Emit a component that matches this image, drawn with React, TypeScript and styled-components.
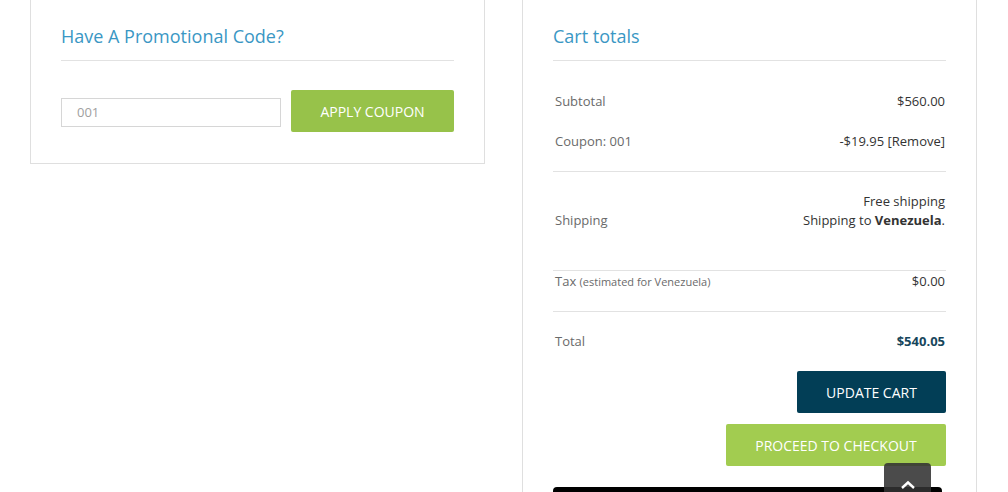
import React from "react";
import styled, { createGlobalStyle } from "styled-components";

const GlobalStyle = createGlobalStyle`
  html, body {
    margin: 0;
    padding: 0;
    background: #fff;
    overflow: hidden;
  }
  body {
    font-family: "Open Sans", "Liberation Sans", sans-serif;
    color: #333;
  }
`;

const Page = styled.div`
  display: flex;
  align-items: flex-start;
  gap: 37px;
  padding-left: 30px;
  margin-top: -1px;
`;

const Card = styled.div`
  width: 455px;
  box-sizing: border-box;
  border: 1px solid #dfdfdf;
  padding: 0 30px;
`;

const PromoCard = styled(Card)`
  padding-bottom: 31px;
`;

const TotalsCard = styled(Card)`
  min-height: 520px;
`;

const CardTitle = styled.h2`
  margin: 0;
  padding: 23px 0 11px;
  font-size: 18px;
  line-height: 26px;
  font-weight: 400;
  color: #3a97c4;
  border-bottom: 1px solid #e2e2e2;
`;

const CouponForm = styled.div`
  display: flex;
  align-items: center;
  gap: 10px;
  margin-top: 29px;
`;

const CouponInput = styled.input`
  width: 220px;
  height: 29px;
  margin-top: 2px;
  box-sizing: border-box;
  border: 1px solid #d6d6d6;
  padding: 0 15px;
  font-family: "Open Sans", "Liberation Sans", sans-serif;
  font-size: 13px;
  color: #a0a0a0;
  outline: none;
`;

const Button = styled.button<{ $bg: string; $width: number }>`
  width: ${({ $width }) => $width}px;
  height: 42px;
  border: none;
  border-radius: 2px;
  background: ${({ $bg }) => $bg};
  color: #fff;
  font-family: "Open Sans", "Liberation Sans", sans-serif;
  font-size: 14px;
  text-transform: uppercase;
  cursor: pointer;
  padding: 0;
`;

const Row = styled.div<{ $top: number; $bottom: number; $line?: boolean; $align?: string }>`
  display: flex;
  justify-content: space-between;
  align-items: ${({ $align }) => $align || "center"};
  padding: ${({ $top, $bottom }) => `${$top}px 1px ${$bottom}px 0`};
  border-bottom: ${({ $line }) => ($line ? "1px solid #e2e2e2" : "none")};
  font-size: 13px;
  line-height: 20px;
`;

const Label = styled.span`
  color: #6a6a6a;
  padding-left: 2px;
`;

const Small = styled.small`
  font-size: 11px;
`;

const Value = styled.span<{ $strong?: boolean }>`
  color: ${({ $strong }) => ($strong ? "#17465c" : "#333")};
  font-weight: ${({ $strong }) => ($strong ? 700 : 400)};
  text-align: right;
  line-height: 19px;
`;

const Actions = styled.div`
  display: flex;
  flex-direction: column;
  align-items: flex-end;
  gap: 11px;
  margin-top: 20px;
`;

const PayBar = styled.div`
  margin-top: 21px;
  width: calc(100% - 4px);
  height: 20px;
  background: #000;
  border-radius: 4px 4px 0 0;
`;

const ScrollTop = styled.button`
  position: fixed;
  right: 77px;
  bottom: 0;
  width: 47px;
  height: 29px;
  border: none;
  border-radius: 4px 4px 0 0;
  background: rgba(50, 50, 50, 0.88);
  display: flex;
  align-items: flex-end;
  justify-content: center;
  padding: 0 0 2px;
  cursor: pointer;
`;

export default function App() {
  return (
    <>
      <GlobalStyle />
      <Page>
        <PromoCard>
          <CardTitle>Have A Promotional Code?</CardTitle>
          <CouponForm>
            <CouponInput defaultValue="001" />
            <Button $bg="#97c24a" $width={163}>Apply Coupon</Button>
          </CouponForm>
        </PromoCard>

        <TotalsCard>
          <CardTitle>Cart totals</CardTitle>
          <Row $top={30} $bottom={10}>
            <Label>Subtotal</Label>
            <Value>$560.00</Value>
          </Row>
          <Row $top={10} $bottom={20} $line>
            <Label>Coupon: 001</Label>
            <Value>-$19.95 [Remove]</Value>
          </Row>
          <Row $top={20} $bottom={40} $line $align="flex-end">
            <Label>Shipping</Label>
            <Value>
              Free shipping
              <br />
              Shipping to <b>Venezuela</b>.
            </Value>
          </Row>
          <Row $top={0} $bottom={19} $line>
            <Label>
              Tax <Small>(estimated for Venezuela)</Small>
            </Label>
            <Value>$0.00</Value>
          </Row>
          <Row $top={19} $bottom={0}>
            <Label>Total</Label>
            <Value $strong>$540.05</Value>
          </Row>
          <Actions>
            <Button $bg="#023e56" $width={149}>Update Cart</Button>
            <Button $bg="#a2cc50" $width={220}>Proceed to checkout</Button>
          </Actions>
          <PayBar />
        </TotalsCard>
      </Page>
      <ScrollTop aria-label="Back to top">
        <svg width="16" height="10" viewBox="0 0 16 10">
          <path d="M2 8 L8 2.5 L14 8" fill="none" stroke="#fff" strokeWidth="2.4" />
        </svg>
      </ScrollTop>
    </>
  );
}
